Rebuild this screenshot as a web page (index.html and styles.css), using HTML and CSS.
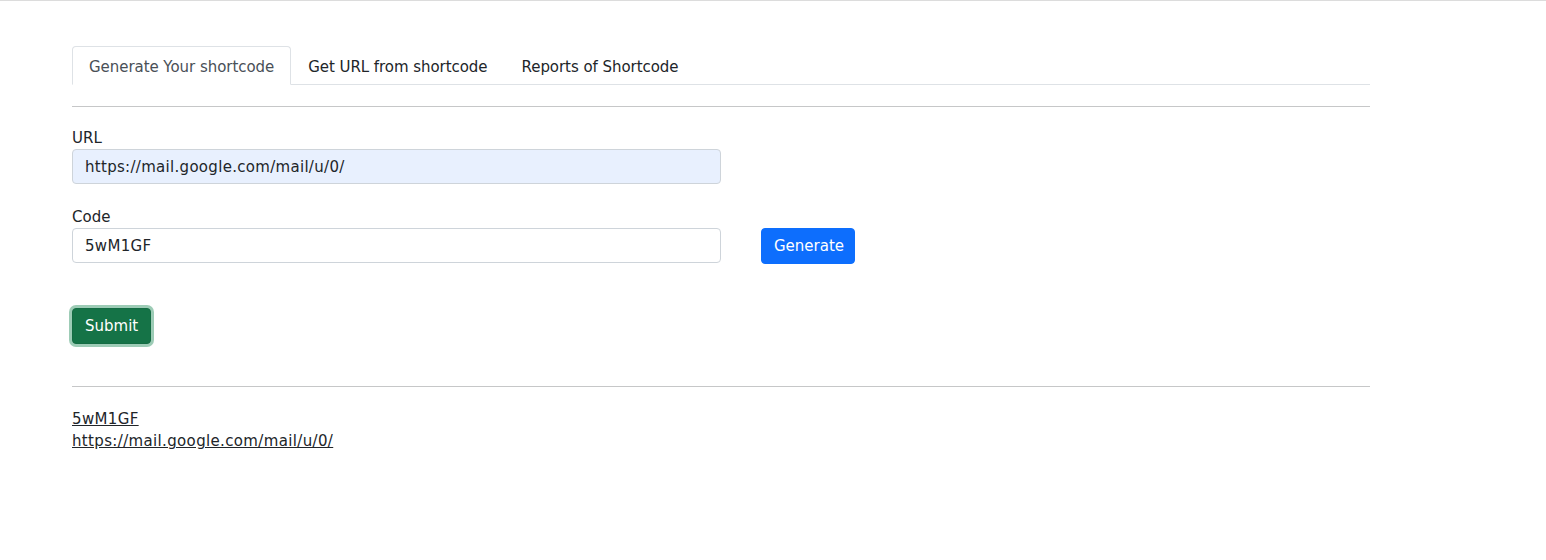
FILE: index.html
```html
<!DOCTYPE html>
<html lang="en">
<head>
<meta charset="utf-8">
<title>Shortcode</title>
<link rel="stylesheet" href="styles.css">
</head>
<body>
<div class="topline"></div>
<main class="page">
  <ul class="tabs">
    <li><a class="tab active" href="#">Generate Your shortcode</a></li>
    <li><a class="tab" href="#">Get URL from shortcode</a></li>
    <li><a class="tab" href="#">Reports of Shortcode</a></li>
  </ul>
  <hr class="rule rule-top">
  <form class="form">
    <div class="field">
      <label class="label" for="url">URL</label>
      <input class="input input-autofill" id="url" type="text" value="https://mail.google.com/mail/u/0/">
    </div>
    <div class="field-row">
      <div class="field">
        <label class="label" for="code">Code</label>
        <input class="input" id="code" type="text" value="5wM1GF">
      </div>
      <button type="button" class="btn btn-blue">Generate</button>
    </div>
    <div class="submit-row">
      <button type="button" class="btn btn-green">Submit</button>
    </div>
  </form>
  <hr class="rule rule-bottom">
  <div class="result">
    <a class="result-link" href="#">5wM1GF</a>
    <a class="result-link" href="#">https://mail.google.com/mail/u/0/</a>
  </div>
</main>
</body>
</html>
```
FILE: styles.css
```css
* { box-sizing: border-box; }
html, body {
  margin: 0;
  padding: 0;
  background: #fff;
}
body {
  font-family: "DejaVu Sans", Verdana, sans-serif;
  font-size: 15px;
  line-height: 21px;
  color: #212529;
}
.topline {
  height: 1px;
  background: #dcdcdc;
}
.page {
  margin-left: 72px;
  width: 1298px;
}
.tabs {
  list-style: none;
  margin: 45px 0 0;
  padding: 0;
  display: flex;
  border-bottom: 1px solid #dee2e6;
}
.tab {
  display: block;
  padding: 10px 16px 6px;
  margin-bottom: -1px;
  border: 1px solid transparent;
  border-top-left-radius: 4px;
  border-top-right-radius: 4px;
  color: #212529;
  text-decoration: none;
  letter-spacing: -0.05px;
}
.tab.active {
  color: #495057;
  border-color: #dee2e6 #dee2e6 #fff;
  background: #fff;
}
.rule {
  margin: 0;
  border: 0;
  height: 1px;
  background: #c6c7c8;
}
.rule-top { margin-top: 21px; }
.rule-bottom { margin-top: 42px; }
.form {
  padding-top: 21px;
}
.field {
  display: flex;
  flex-direction: column;
  width: 649px;
}
.label {
  margin-bottom: 0;
}
.input {
  font: inherit;
  height: 35px;
  padding: 6px 12px;
  border: 1px solid #ced4da;
  border-radius: 4px;
  color: #212529;
  background: #fff;
  outline: none;
  letter-spacing: 0.3px;
}
.input-autofill {
  background: #e8f0fe;
}
.field-row {
  display: flex;
  align-items: flex-end;
  gap: 40px;
  margin-top: 23px;
}
.btn {
  font: inherit;
  height: 36px;
  padding: 6px 12px;
  border: 1px solid transparent;
  border-radius: 4px;
  color: #fff;
  cursor: pointer;
}
.btn-blue {
  width: 94px;
  background: #0d6efd;
  border-color: #0d6efd;
  margin-bottom: -1px;
}
.submit-row {
  margin-top: 45px;
}
.btn-green {
  width: 79px;
  background: #157347;
  border-color: #146c43;
  box-shadow: 0 0 0 3px rgba(60, 153, 110, 0.5);
}
.result {
  display: flex;
  flex-direction: column;
  align-items: flex-start;
  margin-top: 21px;
  line-height: 22px;
}
.result-link {
  color: #212529;
  text-decoration: underline;
  letter-spacing: 0.35px;
}
```
